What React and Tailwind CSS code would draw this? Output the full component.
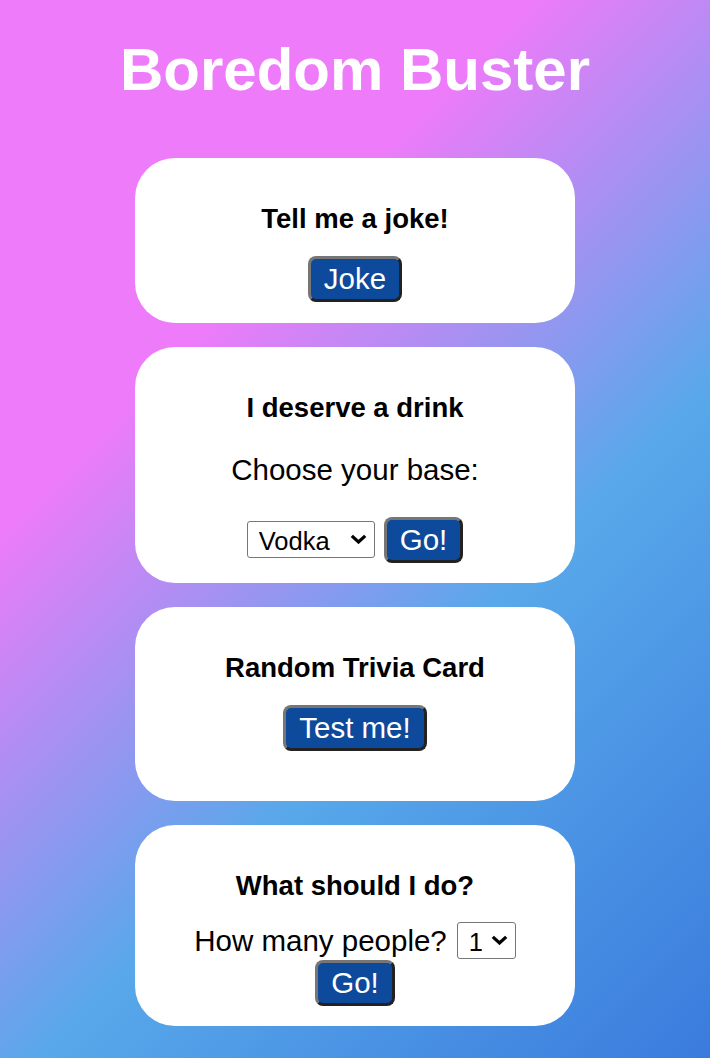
import React from "react";

function Btn({ children }) {
  return (
    <button
      type="button"
      className="rounded-[8px] border-[3px] border-t-[#767676] border-l-[#767676] border-b-[#222222] border-r-[#222222] bg-[#0d4a9b] px-[13px] py-[3px] text-[29.5px] leading-[34px] text-white"
    >
      {children}
    </button>
  );
}

function Chevron() {
  return (
    <svg
      width="17"
      height="10"
      viewBox="0 0 17 10"
      className="pointer-events-none absolute right-[8px] top-[13px]"
    >
      <path d="M1.8 1.8 L8.5 8 L15.2 1.8" fill="none" stroke="#000" strokeWidth="3.2" strokeLinecap="butt" strokeLinejoin="miter" />
    </svg>
  );
}

function Select({ width, options }) {
  return (
    <span className="relative inline-flex">
      <select
        className={`${width} h-[37px] appearance-none rounded-[3px] border border-[#767676] bg-white pl-[11px] text-[25.5px] leading-normal text-black`}
        defaultValue={options[0]}
      >
        {options.map((o) => (
          <option key={o} value={o}>
            {o}
          </option>
        ))}
      </select>
      <Chevron />
    </span>
  );
}

function Card({ children, pb }) {
  return (
    <div className={`mx-auto flex w-[440px] flex-col items-center rounded-[40px] bg-white pt-[45px] ${pb}`}>
      {children}
    </div>
  );
}

function Heading({ children }) {
  return <h3 className="text-[27.5px] font-bold leading-[32px] text-black">{children}</h3>;
}

export default function App() {
  return (
    <div className="min-h-screen w-full bg-[linear-gradient(135deg,#ee7bf9_30%,#58a8ea_62%,#3a7bdd_100%)] font-['Liberation_Sans',Arial,sans-serif] text-black">
      <h1 className="pt-[35px] text-center text-[60px] font-bold leading-[70px] text-white">Boredom Buster</h1>
      <div className="mt-[53px] flex flex-col gap-[24px]">
        <Card pb="pb-[21px]">
          <Heading>Tell me a joke!</Heading>
          <div className="mt-[21px]">
            <Btn>Joke</Btn>
          </div>
        </Card>

        <Card pb="pb-[20px]">
          <Heading>I deserve a drink</Heading>
          <p className="mt-[29px] text-[29.5px] leading-[34px]">Choose your base:</p>
          <div className="mt-[30px] flex items-baseline gap-[9px]">
            <Select width="w-[128px]" options={["Vodka", "Gin", "Rum", "Tequila"]} />
            <Btn>Go!</Btn>
          </div>
        </Card>

        <Card pb="pb-[50px]">
          <Heading>Random Trivia Card</Heading>
          <div className="mt-[21px]">
            <Btn>Test me!</Btn>
          </div>
        </Card>

        <Card pb="pb-[20px]">
          <Heading>What should I do?</Heading>
          <div className="mt-[20px] flex items-baseline gap-[10px]">
            <span className="text-[29.5px] leading-[34px]">How many people?</span>
            <Select width="w-[59px]" options={["1", "2", "3", "4", "5"]} />
          </div>
          <div className="mt-[1px]">
            <Btn>Go!</Btn>
          </div>
        </Card>
      </div>
    </div>
  );
}
